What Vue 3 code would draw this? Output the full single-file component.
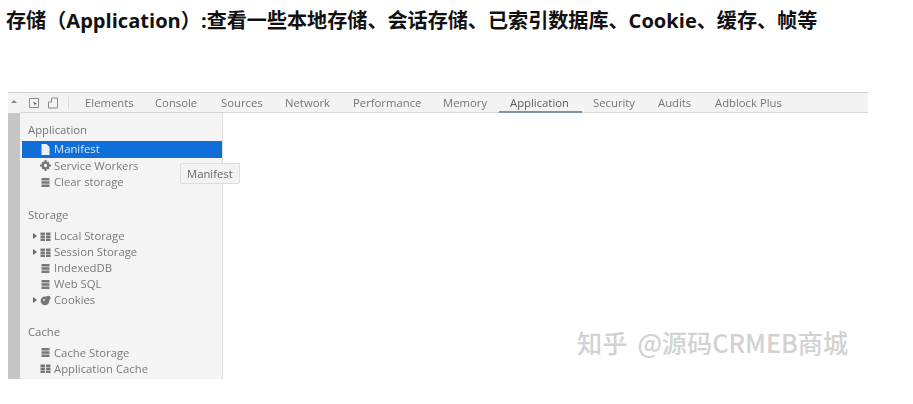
<script setup>
const tabs = [
  { name: 'Elements', w: 70 },
  { name: 'Console', w: 66 },
  { name: 'Sources', w: 64 },
  { name: 'Network', w: 68 },
  { name: 'Performance', w: 90 },
  { name: 'Memory', w: 67 },
  { name: 'Application', w: 83, active: true },
  { name: 'Security', w: 65 },
  { name: 'Audits', w: 57 },
  { name: 'Adblock Plus', w: 80 }
]
const sections = [
  { title: 'Application', items: [
    { name: 'Manifest', icon: 'file', selected: true },
    { name: 'Service Workers', icon: 'gear' },
    { name: 'Clear storage', icon: 'db' }
  ] },
  { title: 'Storage', items: [
    { name: 'Local Storage', icon: 'grid', arrow: true },
    { name: 'Session Storage', icon: 'grid', arrow: true },
    { name: 'IndexedDB', icon: 'db' },
    { name: 'Web SQL', icon: 'db' },
    { name: 'Cookies', icon: 'cookie', arrow: true }
  ] },
  { title: 'Cache', items: [
    { name: 'Cache Storage', icon: 'db' },
    { name: 'Application Cache', icon: 'grid' }
  ] }
]
</script>

<template>
  <div class="page">
    <h1 class="title">存储（Application）:查看一些本地存储、会话存储、已索引数据库、Cookie、缓存、帧等</h1>
    <div class="shot">
      <div class="blurred">
        <div class="gutter"><span class="up"></span></div>
        <div class="main">
          <div class="toolbar">
            <svg class="tool" width="12" height="12" viewBox="0 0 12 12"><path d="M1.500 1.500h9v9h-9z" fill="none" stroke="#8a8a8a"/><path d="M5 4.500l4 2-1.600.7L7 9z" fill="#666"/></svg>
            <svg class="tool second" width="12" height="12" viewBox="0 0 12 12"><path d="M4.500 1h6v10h-9V5h3z" fill="none" stroke="#8a8a8a"/></svg>
            <span class="sep"></span>
            <div v-for="t in tabs" :key="t.name" class="tab" :class="{ active: t.active }" :style="{ width: t.w + 'px' }">{{ t.name }}</div>
          </div>
          <div class="body">
            <aside class="sidebar">
              <section v-for="s in sections" :key="s.title" class="section">
                <div class="label">{{ s.title }}</div>
                <div v-for="i in s.items" :key="i.name" class="row" :class="{ selected: i.selected }">
                  <span class="arrow"><i v-if="i.arrow"></i></span>
                  <svg class="icon" width="11" height="11" viewBox="0 0 11 11">
                    <path v-if="i.icon === 'file'" d="M1.500 0h5l3 3v8h-8z" fill="currentColor"/>
                    <g v-else-if="i.icon === 'gear'" fill="currentColor">
                      <circle cx="5.500" cy="5.500" r="2.800" fill="none" stroke="currentColor" stroke-width="2.200"/>
                      <path d="M4.500 0h2v2.500h-2zM4.500 8.500h2V11h-2zM0 4.500h2.500v2H0zM8.500 4.500H11v2H8.500z"/>
                      <path d="M1.500 2.900l1.400-1.400 1.500 1.500-1.400 1.400zM8.100 9.500l1.400-1.400-1.500-1.500-1.400 1.400zM1.500 8.100l1.400 1.400 1.500-1.500-1.400-1.400zM8.100 1.500l1.400 1.400-1.500 1.500-1.400-1.400z"/>
                    </g>
                    <path v-else-if="i.icon === 'db'" d="M1.500 1h8v2.600h-8zM1.500 4.200h8v2.600h-8zM1.500 7.400h8V10h-8z" fill="currentColor"/>
                    <path v-else-if="i.icon === 'grid'" d="M.5 1.500h4.500v2.400H.5zM6 1.500h4.500v2.400H6zM.5 4.500h4.500v2.400H.5zM6 4.500h4.500v2.400H6zM.5 7.500h4.500v2.400H.5zM6 7.500h4.500v2.400H6z" fill="currentColor"/>
                    <g v-else fill="currentColor"><circle cx="5" cy="5.800" r="4.400"/><circle cx="8.300" cy="3" r="2.300"/><circle cx="4" cy="5" r=".9" fill="#f4f4f4"/></g>
                  </svg>
                  <span class="name">{{ i.name }}</span>
                </div>
              </section>
            </aside>
            <div class="content"></div>
          </div>
        </div>
        <div class="tooltip">Manifest</div>
      </div>
      <div class="watermark"><span class="zhihu">知乎</span>@源码CRMEB商城</div>
    </div>
  </div>
</template>

<style scoped>
.page {
  width: 913px;
  height: 404px;
  overflow: hidden;
  background: #fff;
}
.title {
  margin: 0;
  padding: 9px 0 0 6px;
  height: 92px;
  box-sizing: border-box;
  font: 700 20.100px/24px "Open Sans", "Noto Sans CJK SC", sans-serif;
  color: #111;
  white-space: nowrap;
}
.shot {
  position: relative;
  margin-left: 8px;
  width: 860px;
  height: 287px;
  overflow: hidden;
}
.blurred {
  display: flex;
  height: 100%;
  filter: blur(0.55px);
  font: 11.300px/16px "Open Sans", sans-serif;
  color: #6e6e6e;
}
.gutter {
  flex: none;
  width: 12px;
  background: linear-gradient(#f4f4f4 0 20px, #c6c6c6 20px);
  border-top: 1px solid #d0d0d0;
  box-sizing: border-box;
}
.up {
  display: block;
  margin: 7px 0 0 3px;
  width: 0;
  height: 0;
  border: 3px solid transparent;
  border-top: 0;
  border-bottom-color: #888;
}
.main {
  flex: 1;
  display: flex;
  flex-direction: column;
  min-width: 0;
}
.toolbar {
  flex: none;
  height: 21px;
  box-sizing: border-box;
  display: flex;
  align-items: center;
  background: #f3f3f3;
  border-top: 1px solid #cfcfcf;
  border-bottom: 1px solid #d6d6d6;
}
.tool {
  flex: none;
  margin-left: 8px;
}
.tool.second {
  margin-left: 7px;
}
.sep {
  flex: none;
  width: 1px;
  height: 13px;
  margin: 0 16px 0 9px;
  background: #dcdcdc;
}
.tab {
  flex: none;
  height: 19px;
  box-sizing: border-box;
  line-height: 19px;
  white-space: nowrap;
  color: #757575;
}
.tab.active {
  margin-left: -11px;
  margin-right: 11px;
  padding-left: 11px;
  color: #5c5c5c;
  border-bottom: 2px solid #7f93a8;
  height: 20px;
}
.body {
  flex: 1;
  display: flex;
  min-height: 0;
}
.sidebar {
  flex: none;
  width: 203px;
  box-sizing: border-box;
  background: #f4f4f4;
  border-right: 1px solid #dedede;
  padding-top: 9px;
}
.section {
  margin-bottom: 15.500px;
}
.section:first-child {
  margin-bottom: 16.500px;
}
.label {
  height: 21px;
  padding-left: 8px;
  color: #757575;
}
.row {
  display: flex;
  align-items: center;
  height: 16px;
  color: #7a7a7a;
}
.section:first-child .row {
  height: 16.500px;
}
.row.selected {
  margin: -2px 0 0 2px;
  background: #0f6ed8;
  color: #dbe9f8;
}
.arrow {
  flex: none;
  width: 20px;
  display: flex;
  justify-content: flex-end;
  padding-right: 3px;
  box-sizing: border-box;
}
.selected .arrow {
  width: 18px;
}
.arrow i {
  width: 0;
  height: 0;
  border: 3px solid transparent;
  border-right: 0;
  border-left: 4px solid #666;
}
.icon {
  flex: none;
  color: #777;
  margin-right: 3px;
}
.selected .icon {
  color: #e8f1fb;
}
.name {
  white-space: nowrap;
}
.content {
  flex: 1;
  background: #fff;
}
.tooltip {
  position: absolute;
  left: 172px;
  top: 71px;
  padding: 1px 6px;
  line-height: 17px;
  color: #666;
  background: #f3f3f3;
  border: 1px solid #dcdcdc;
  border-radius: 2px;
}
.watermark {
  position: absolute;
  left: 569px;
  top: 234px;
  font: 500 25.200px/32px "Noto Sans CJK SC", sans-serif;
  color: #d2d2d2;
  white-space: nowrap;
}
.zhihu {
  margin-right: 10px;
}
</style>
